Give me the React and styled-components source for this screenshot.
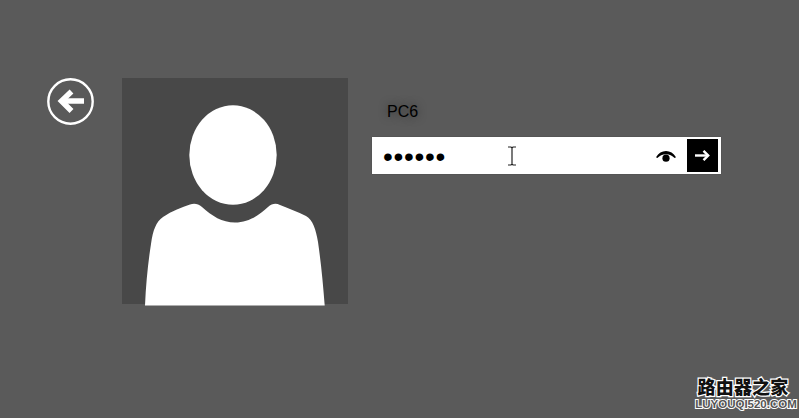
import React from 'react';
import styled, { createGlobalStyle } from 'styled-components';

const GlobalStyle = createGlobalStyle`
  html, body {
    margin: 0;
    padding: 0;
    background: #5a5a5a;
  }
`;

const Page = styled.div`
  position: relative;
  width: 799px;
  height: 418px;
  box-sizing: border-box;
  padding: 78px 0 0 47px;
  display: flex;
  align-items: flex-start;
  background: #5a5a5a;
  overflow: hidden;
  font-family: "Liberation Sans", Arial, sans-serif;
`;

const BackButton = styled.button`
  width: 47px;
  height: 47px;
  padding: 0;
  border: 0;
  background: none;
  display: block;
  flex: none;
`;

const Tile = styled.div`
  width: 226px;
  height: 226px;
  margin-left: 28px;
  background: #484848;
  flex: none;
`;

const Login = styled.div`
  margin-left: 24px;
  width: 349px;
  display: flex;
  flex-direction: column;
`;

const UserName = styled.div`
  margin: 24px 0 0 15px;
  height: 19px;
  font-size: 16px;
  line-height: 19px;
  color: #000;
  text-shadow: 0 0 8px rgba(0, 0, 0, 0.5);
`;

const Field = styled.div`
  position: relative;
  margin-top: 16px;
  height: 37px;
  box-sizing: border-box;
  padding: 2px 3px 2px 11px;
  display: flex;
  align-items: center;
  background: #fff;
  box-shadow: 0 0 1px rgba(50, 50, 50, 0.7);
`;

const Password = styled.input`
  flex: 1;
  min-width: 0;
  height: 30px;
  margin-top: 3px;
  border: 0;
  padding: 0;
  outline: none;
  background: none;
  font-family: "Liberation Sans", Arial, sans-serif;
  font-size: 28px;
  letter-spacing: 0.7px;
  color: #000;
`;

const EyeIcon = styled.svg`
  width: 20px;
  height: 11px;
  margin: 2px 11px 0 0;
  flex: none;
`;

const Submit = styled.button`
  width: 31px;
  height: 33px;
  padding: 0;
  border: 0;
  background: #000;
  display: flex;
  align-items: center;
  justify-content: center;
  flex: none;
`;

const Caret = styled.svg`
  position: absolute;
  left: 135px;
  top: 9px;
  width: 10px;
  height: 20px;
`;

const Watermark = styled.div`
  position: absolute;
  right: 0;
  bottom: 8px;
  width: 106px;
  display: flex;
  flex-direction: column;
  align-items: center;
  color: #111;
  font-weight: 700;
  paint-order: stroke fill;
  -webkit-text-stroke: 2.5px #fff;
`;

const WatermarkName = styled.div`
  font-family: "Noto Sans CJK SC", sans-serif;
  font-size: 18px;
  line-height: 20px;
  letter-spacing: 0.2px;
  margin-right: 6px;
  font-weight: 900;
`;

const WatermarkUrl = styled.div`
  font-family: "Liberation Sans", Arial, sans-serif;
  font-size: 11.5px;
  line-height: 11px;
  margin-top: 3px;
  white-space: nowrap;
  color: #555;
  -webkit-text-stroke: 2px #fff;
`;

function App() {
  return (
    <Page>
      <GlobalStyle />
      <BackButton aria-label="Back">
        <svg width="47" height="47" viewBox="0 0 47 47">
          <circle cx="23.5" cy="23.5" r="22.2" fill="none" stroke="#fff" strokeWidth="2.4" />
          <path d="M37 23H15" stroke="#fff" strokeWidth="5.5" fill="none" />
          <path d="M24.5 13.5L14.5 23L24.5 33" stroke="#fff" strokeWidth="5.5" fill="none" />
        </svg>
      </BackButton>

      <Tile>
        <svg width="226" height="228" viewBox="0 0 226 228" style={{ display: 'block', overflow: 'visible' }}>
          <ellipse cx="111" cy="77" rx="43.7" ry="49.7" fill="#fff" />
          <path
            fill="#fff"
            d="M23 227.5C24 205 26 185 29 166C31 152 34 144 41 139C50 133 60 129 68 126.5C72 125 76 125.5 80 129C90 138 100 144.5 113 144.5C126 144.5 136 138 146 129C150 125.5 154 125 158 127C166 130 176 134 184 138C191 142 194 152 196 164C199 185 201 205 202.7 227.5Z"
          />
        </svg>
      </Tile>

      <Login>
        <UserName>PC6</UserName>
        <Field>
          <Password type="password" value="123456" readOnly />
          <EyeIcon viewBox="0 0 20 11">
            <path d="M0 6.2C2.5 2 6 0 10 0C14 0 17.5 2 20 6.2L18.6 7C16.4 4.6 13.4 3.2 10 3.2C6.6 3.2 3.6 4.6 1.4 7Z" fill="#000" />
            <circle cx="10" cy="7.2" r="3.6" fill="#000" />
          </EyeIcon>
          <Submit aria-label="Submit">
            <svg width="15" height="11" viewBox="0 0 15 11">
              <path d="M0 5.5H13" stroke="#fff" strokeWidth="2.4" fill="none" />
              <path d="M8.5 0.8L13.2 5.5L8.5 10.2" stroke="#fff" strokeWidth="2.4" fill="none" />
            </svg>
          </Submit>
          <Caret viewBox="0 0 10 20">
            <path d="M1 1H4L5 2L6 1H9M5 2V18M1 19H4L5 18L6 19H9" stroke="#222" strokeWidth="1.2" fill="none" />
          </Caret>
        </Field>
      </Login>

      <Watermark>
        <WatermarkName>路由器之家</WatermarkName>
        <WatermarkUrl>LUYOUQI520.COM</WatermarkUrl>
      </Watermark>
    </Page>
  );
}

export default App;
